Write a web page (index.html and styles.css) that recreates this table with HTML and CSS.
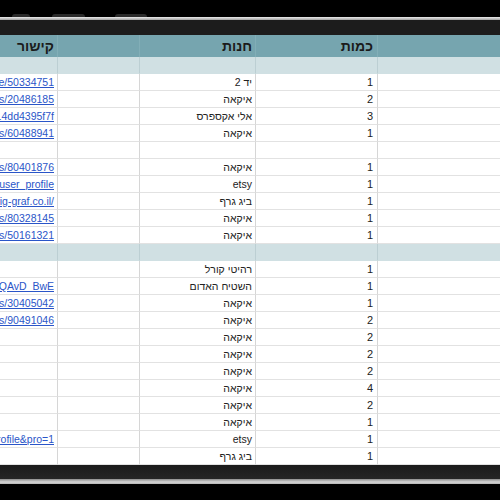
FILE: index.html
```html
<!DOCTYPE html>
<html lang="he">
<head>
<meta charset="utf-8">
<title>Sheet</title>
<link rel="stylesheet" href="styles.css">
</head>
<body>
<div class="screen">
  <div class="bezel-top">
    <span class="tab tab-a"></span>
    <span class="tab tab-b"></span>
    <span class="tab tab-c"></span>
  </div>
  <div class="edge"></div>
  <div class="toolbar"></div>

  <div class="sheet" dir="rtl">
    <div class="row head">
      <div class="cell"></div>
      <div class="cell">כמות</div>
      <div class="cell">חנות</div>
      <div class="cell"></div>
      <div class="cell">קישור</div>
    </div>
    <div class="row band"><div class="cell"></div><div class="cell"></div><div class="cell"></div><div class="cell"></div><div class="cell"></div></div>

    <div class="row"><div class="cell"></div><div class="cell">1</div><div class="cell">יד 2</div><div class="cell"></div><div class="cell"><a dir="ltr" href="#">https://www.yad2.co.il/item/re/50334751</a></div></div>
    <div class="row"><div class="cell"></div><div class="cell">2</div><div class="cell">איקאה</div><div class="cell"></div><div class="cell"><a dir="ltr" href="#">https://www.ikea.co.il/products/20486185</a></div></div>
    <div class="row"><div class="cell"></div><div class="cell">3</div><div class="cell">אלי אקספרס</div><div class="cell"></div><div class="cell"><a dir="ltr" href="#">https://aliexpress.com/item/a8c14dd4395f7f</a></div></div>
    <div class="row"><div class="cell"></div><div class="cell">1</div><div class="cell">איקאה</div><div class="cell"></div><div class="cell"><a dir="ltr" href="#">https://www.ikea.co.il/products/60488941</a></div></div>
    <div class="row"><div class="cell"></div><div class="cell"></div><div class="cell"></div><div class="cell"></div><div class="cell"></div></div>
    <div class="row"><div class="cell"></div><div class="cell">1</div><div class="cell">איקאה</div><div class="cell"></div><div class="cell"><a dir="ltr" href="#">https://www.ikea.co.il/products/80401876</a></div></div>
    <div class="row"><div class="cell"></div><div class="cell">1</div><div class="cell">etsy</div><div class="cell"></div><div class="cell"><a dir="ltr" href="#">https://www.etsy.com/listing?ref=user_profile</a></div></div>
    <div class="row"><div class="cell"></div><div class="cell">1</div><div class="cell">ביג גרף</div><div class="cell"></div><div class="cell"><a dir="ltr" href="#">https://www.big-graf.co.il/</a></div></div>
    <div class="row"><div class="cell"></div><div class="cell">1</div><div class="cell">איקאה</div><div class="cell"></div><div class="cell"><a dir="ltr" href="#">https://www.ikea.co.il/products/80328145</a></div></div>
    <div class="row"><div class="cell"></div><div class="cell">1</div><div class="cell">איקאה</div><div class="cell"></div><div class="cell"><a dir="ltr" href="#">https://www.ikea.co.il/products/50161321</a></div></div>

    <div class="row band"><div class="cell"></div><div class="cell"></div><div class="cell"></div><div class="cell"></div><div class="cell"></div></div>

    <div class="row"><div class="cell"></div><div class="cell">1</div><div class="cell">רהיטי קורל</div><div class="cell"></div><div class="cell"></div></div>
    <div class="row"><div class="cell"></div><div class="cell">1</div><div class="cell">השטיח האדום</div><div class="cell"></div><div class="cell"><a dir="ltr" href="#">https://www.hashatiach.co.il/?gclid=EAIaIQAvD_BwE</a></div></div>
    <div class="row"><div class="cell"></div><div class="cell">1</div><div class="cell">איקאה</div><div class="cell"></div><div class="cell"><a dir="ltr" href="#">https://www.ikea.co.il/products/30405042</a></div></div>
    <div class="row"><div class="cell"></div><div class="cell">2</div><div class="cell">איקאה</div><div class="cell"></div><div class="cell"><a dir="ltr" href="#">https://www.ikea.co.il/products/90491046</a></div></div>
    <div class="row"><div class="cell"></div><div class="cell">2</div><div class="cell">איקאה</div><div class="cell"></div><div class="cell"></div></div>
    <div class="row"><div class="cell"></div><div class="cell">2</div><div class="cell">איקאה</div><div class="cell"></div><div class="cell"></div></div>
    <div class="row"><div class="cell"></div><div class="cell">2</div><div class="cell">איקאה</div><div class="cell"></div><div class="cell"></div></div>
    <div class="row"><div class="cell"></div><div class="cell">4</div><div class="cell">איקאה</div><div class="cell"></div><div class="cell"></div></div>
    <div class="row"><div class="cell"></div><div class="cell">2</div><div class="cell">איקאה</div><div class="cell"></div><div class="cell"></div></div>
    <div class="row"><div class="cell"></div><div class="cell">1</div><div class="cell">איקאה</div><div class="cell"></div><div class="cell"></div></div>
    <div class="row"><div class="cell"></div><div class="cell">1</div><div class="cell">etsy</div><div class="cell"></div><div class="cell"><a dir="ltr" href="#">https://www.etsy.com/shop?ref=profile&amp;pro=1</a></div></div>
    <div class="row"><div class="cell"></div><div class="cell">1</div><div class="cell">ביג גרף</div><div class="cell"></div><div class="cell"></div></div>
  </div>

  <div class="toolbar bottom"></div>
  <div class="edge bottom-edge"></div>
  <div class="bezel-bottom"></div>
</div>
</body>
</html>
```

FILE: styles.css
```css
html, body {
  margin: 0;
  padding: 0;
  background: #000;
}

.screen {
  width: 500px;
  height: 500px;
  overflow: hidden;
  background: #000;
  display: flex;
  flex-direction: column;
  font-family: "Liberation Sans", Arial, sans-serif;
}

.bezel-top {
  height: 17px;
  flex: none;
  background: #000;
  display: flex;
  align-items: flex-end;
}

.tab {
  height: 3px;
  background: #2b2b2b;
  border-radius: 3px 3px 0 0;
}
.tab-a { width: 18px; margin-left: 12px; }
.tab-b { width: 33px; margin-left: 22px; }
.tab-c { width: 32px; margin-left: 30px; }

.edge {
  height: 3px;
  flex: none;
  background: linear-gradient(#ececec, #a0a0a0);
}

.toolbar {
  height: 15px;
  flex: none;
  background: #1c1c1c;
}

.toolbar.bottom {
  height: 14px;
  background: linear-gradient(#1a1a1a, #252525);
}

.bottom-edge {
  height: 5px;
  background: linear-gradient(#8a8a8a, #d6d6d6 60%, #b5b5b5);
}

.bezel-bottom {
  flex: 1;
  background: #000;
}

.sheet {
  flex: none;
  background: #fff;
}

.row {
  display: grid;
  grid-template-columns: 123px 122px 116px 82px 57px;
  height: 17px;
}

.cell {
  box-sizing: border-box;
  border-bottom: 1px solid #e2e2e2;
  border-left: 1px solid #d6d6d6;
  padding: 0 3px;
  font-size: 10.5px;
  line-height: 16px;
  color: #222;
  white-space: nowrap;
  overflow: hidden;
  text-align: right;
}

.row .cell:nth-child(2) {
  padding-right: 4px;
  font-size: 11px;
}

.row .cell:last-child {
  border-left: none;
}

.head {
  height: 22px;
  background: #76a5af;
}

.head .cell {
  border-bottom: none;
  border-left-color: #82aeb7;
  font-size: 14px;
  font-weight: bold;
  line-height: 22px;
  color: #1b1b1b;
}

.row.head .cell:nth-child(2) {
  font-size: 14px;
}

.band {
  background: #d0e0e3;
}

.band .cell {
  border-bottom-color: #d0e0e3;
  border-left-color: #bccfd3;
}

.cell a {
  color: #2a55c8;
  text-decoration: underline;
}
```
